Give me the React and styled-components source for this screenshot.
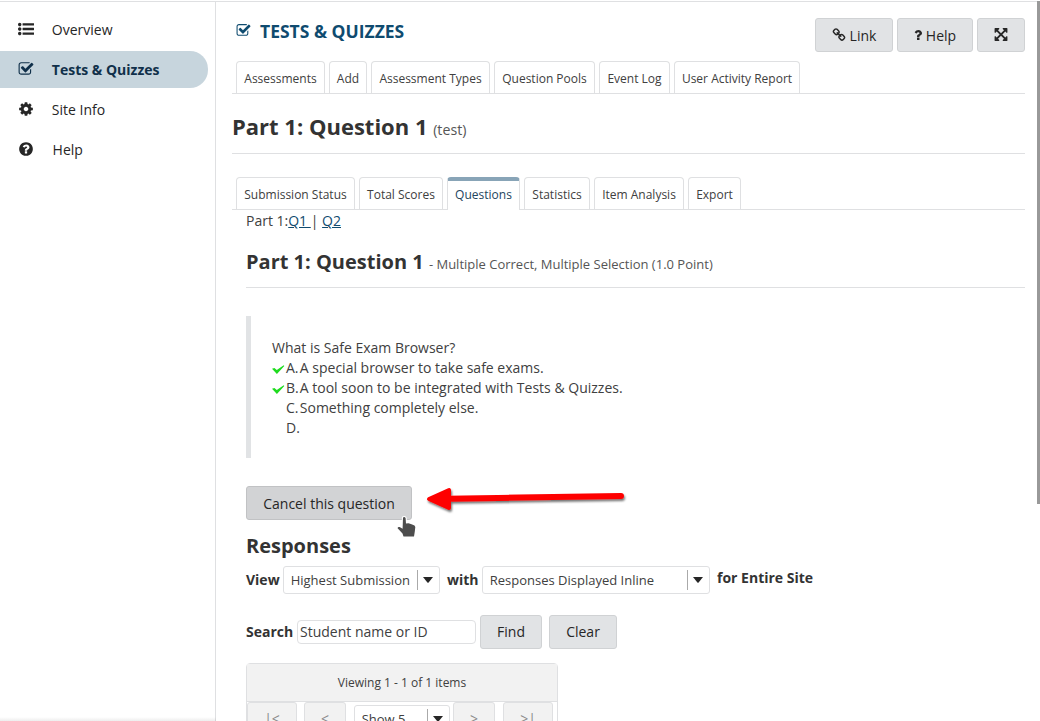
import React from "react";
import styled, { createGlobalStyle, css } from "styled-components";

const Global = createGlobalStyle`
  *, *::before, *::after { box-sizing: border-box; }
  html, body { margin: 0; padding: 0; background: #fff; overflow: hidden; }
  body {
    font-family: "Open Sans", "Noto Sans", sans-serif;
    font-size: 14px;
    line-height: 20px;
    color: #333;
  }
  h1, h2, h3, p, ul { margin: 0; padding: 0; }
`;

const Page = styled.div`
  position: relative;
  display: flex;
  width: 1040px;
  height: 721px;
  overflow: hidden;
  border-top: 1px solid #fff;
`;

const Sidebar = styled.nav`
  width: 216px;
  flex: none;
  border-top: 1px solid #dfe0e2;
  border-right: 1px solid #dfe0e2;
  padding-top: 9px;
  display: flex;
  flex-direction: column;
  gap: 3px;
`;

const NavItem = styled.a`
  display: flex;
  align-items: center;
  width: 208px;
  height: 37px;
  padding-left: 18px;
  border-radius: 0 18px 18px 0;
  color: #262626;
  ${(p) => p.$active && css`
    background: #c7d5dd;
    color: #10304a;
    font-weight: 700;
  `}
`;

const NavLabel = styled.span`
  margin-left: ${(p) => p.$gap || 17.8}px;
  padding-top: 1px;
`;

const Icon = styled.svg`
  flex: none;
  display: block;
  width: ${(p) => p.$w}px;
  height: ${(p) => p.$h}px;
  margin-bottom: ${(p) => p.$lift}px;
  fill: currentColor;
`;

const Main = styled.main`
  flex: 1;
  border-top: 1px solid #dfe0e2;
  padding: 0 15px 0 16px;
  display: flex;
  flex-direction: column;

  > * { flex: none; }
`;

const Header = styled.header`
  display: flex;
  justify-content: space-between;
  height: 59px;
  padding: 16px 0 0 4px;
`;

const ToolTitle = styled.h1`
  display: flex;
  align-items: center;
  gap: 9px;
  height: 26px;
  font-size: 17.5px;
  font-weight: 700;
  color: #0f4b6f;
`;

const Actions = styled.div`
  display: flex;
  gap: 4px;
`;

const Button = styled.button`
  flex: none;
  display: flex;
  align-items: center;
  justify-content: center;
  gap: 4px;
  width: ${(p) => p.$w}px;
  height: 34px;
  padding: ${(p) => (p.$low ? 2 : 0)}px 0 0;
  font: inherit;
  color: #262626;
  background: ${(p) => (p.$hover ? "#d2d3d5" : "#e1e3e5")};
  border: 1px solid ${(p) => (p.$hover ? "#c1c2c4" : "#d0d2d4")};
  border-radius: 3px;
`;

const Tabs = styled.div`
  display: flex;
  gap: 4px;
  height: 33px;
  padding-left: 4px;
  border-bottom: 1px solid #dfe0e2;
`;

const Tab = styled.a`
  display: flex;
  justify-content: center;
  width: ${(p) => p.$w}px;
  height: 32px;
  padding-top: 7px;
  font-size: 12px;
  white-space: nowrap;
  color: #404040;
  border: 1px solid #dfe0e2;
  border-bottom: 0;
  border-radius: 4px 4px 0 0;
  ${(p) => p.$active && css`
    height: 33px;
    padding-top: 4px;
    background: #fff;
    color: #24455e;
    border-top: 4px solid #88a4b7;
  `}
`;

const PageHeading = styled.h2`
  height: 60px;
  margin-bottom: 23px;
  padding-top: 19px;
  font-size: 22px;
  line-height: 26px;
  font-weight: 700;
  border-bottom: 1px solid #dfe0e2;
`;

const Small = styled.small`
  font-size: ${(p) => p.$size || 14.2}px;
  font-weight: 400;
  color: #555;
`;

const Body = styled.section`
  padding-left: 14px;
  display: flex;
  flex-direction: column;

  > * { flex: none; }
`;

const PartLinks = styled.p`
  height: 20px;
  margin-top: 1px;
  color: #404040;
  white-space: pre;
`;

const PartLink = styled.a`
  color: #0f4b6f;
  text-decoration: underline;
`;

const QuestionHeading = styled.h3`
  height: 57px;
  padding-top: 18px;
  font-size: 20px;
  line-height: 26px;
  font-weight: 700;
  border-bottom: 1px solid #dfe0e2;
`;

const Quote = styled.div`
  height: 142px;
  margin: 28px 0;
  padding: 22px 0 0 21px;
  border-left: 5px solid #e1e3e5;
  color: #404040;
`;

const Answer = styled.div`
  display: grid;
  grid-template-columns: 14px 13.8px 1fr;
  align-items: center;
  height: 20px;
`;

const TickMark = styled.svg`
  display: block;
  margin-top: 2px;
`;

const ResponsesHeading = styled.h3`
  height: 46px;
  padding-top: 13px;
  font-size: 20px;
  line-height: 26px;
  font-weight: 700;
`;

const FilterRow = styled.div`
  display: flex;
  align-items: center;
  height: 28px;
`;

const SearchRow = styled.div`
  display: flex;
  align-items: center;
  height: 34px;
  margin: 21px 0 14px;
`;

const SearchButtons = styled.div`
  display: flex;
  gap: 7px;
`;

const Label = styled.label`
  flex: none;
  width: ${(p) => p.$w}px;
  font-weight: 700;
  white-space: nowrap;
  ${(p) => p.$raised && css`
    padding-bottom: 4px;
  `}
`;

const SelectBox = styled.div`
  flex: none;
  display: flex;
  align-items: center;
  justify-content: space-between;
  width: ${(p) => p.$w}px;
  height: 28px;
  padding-left: 6.7px;
  margin-right: ${(p) => p.$gap || 0}px;
  font-size: 13px;
  color: #404040;
  background: #fff;
  border: 1px solid #dfe0e2;
  border-radius: 3px;
`;

const Caret = styled.span`
  display: flex;
  align-items: center;
  width: 22px;
  height: 20px;
  padding-left: 5px;
  border-left: 1px solid #aaa;
  color: #262626;
`;

const SearchInput = styled.div`
  width: 179px;
  height: 24px;
  margin-right: 4px;
  padding: 1px 2px;
  color: #404040;
  border: 1px solid #dfe0e2;
  border-radius: 4px;
`;

const Pager = styled.div`
  width: 312px;
  height: 80px;
  border: 1px solid #dfe0e2;
  border-radius: 4px 4px 0 0;
`;

const PagerInfo = styled.div`
  height: 38px;
  padding-top: 9px;
  font-size: 12px;
  text-align: center;
  color: #404040;
  background: #f2f2f2;
  border-bottom: 1px solid #dfe0e2;
`;

const PagerControls = styled.div`
  display: flex;
  align-items: flex-start;
`;

const PagerButton = styled.div`
  flex: none;
  width: ${(p) => p.$w}px;
  height: 34px;
  margin-right: ${(p) => p.$gap}px;
  padding-top: 6px;
  text-align: center;
  color: #8a8a8a;
  background: #f2f2f2;
  border: 1px solid #dfe0e2;
  border-radius: 3px;
`;

const PagerSelect = styled.div`
  padding-top: 3px;
`;

const ScrollThumb = styled.div`
  position: absolute;
  right: 0;
  top: -1px;
  width: 3px;
  height: 504px;
  background: #999;
`;

const BottomShade = styled.div`
  position: absolute;
  left: 0;
  bottom: 0;
  width: 216px;
  height: 4px;
  background: linear-gradient(to bottom, rgba(0, 0, 0, 0), rgba(0, 0, 0, 0.07));
`;

const Overlay = styled.svg`
  position: absolute;
  left: ${(p) => p.$x}px;
  top: ${(p) => p.$y}px;
`;

const paths = {
  list: "M384 1408q0 80-56 136t-136 56-136-56-56-136 56-136 136-56 136 56 56 136zm0-512q0 80-56 136t-136 56-136-56-56-136 56-136 136-56 136 56 56 136zm1408 416v192q0 13-9.5 22.5t-22.5 9.5h-1216q-13 0-22.5-9.5t-9.5-22.5v-192q0-13 9.5-22.5t22.5-9.5h1216q13 0 22.5 9.5t9.5 22.5zm-1408-928q0 80-56 136t-136 56-136-56-56-136 56-136 136-56 136 56 56 136zm1408 416v192q0 13-9.5 22.5t-22.5 9.5h-1216q-13 0-22.5-9.5t-9.5-22.5v-192q0-13 9.5-22.5t22.5-9.5h1216q13 0 22.5 9.5t9.5 22.5zm0-512v192q0 13-9.5 22.5t-22.5 9.5h-1216q-13 0-22.5-9.5t-9.5-22.5v-192q0-13 9.5-22.5t22.5-9.5h1216q13 0 22.5 9.5t9.5 22.5z",
  check: "M1472 930v318q0 119-84.5 203.5t-203.5 84.5h-832q-119 0-203.5-84.5t-84.5-203.5v-832q0-119 84.5-203.5t203.5-84.5h832q63 0 117 25 15 7 18 23 3 17-9 29l-49 49q-10 10-23 10-3 0-9-2-23-6-45-6h-832q-66 0-113 47t-47 113v832q0 66 47 113t113 47h832q66 0 113-47t47-113v-254q0-13 9-22l64-64q10-10 23-10 6 0 12 3 20 8 20 29zm231-489l-814 814q-24 24-57 24t-57-24l-430-430q-24-24-24-57t24-57l110-110q24-24 57-24t57 24l263 263 647-647q24-24 57-24t57 24l110 110q24 24 24 57t-24 57z",
  cog: "M1152 896q0-106-75-181t-181-75-181 75-75 181 75 181 181 75 181-75 75-181zm512-109v222q0 12-8 23t-20 13l-185 28q-19 54-39 91 35 50 107 138 10 12 10 25t-9 23q-27 37-99 108t-94 71q-12 0-26-9l-138-108q-44 23-91 38-16 136-29 186-7 28-36 28h-222q-14 0-24.5-8.5t-11.5-21.5l-28-184q-49-16-90-37l-141 107q-10 9-25 9-14 0-25-11-126-114-165-168-7-10-7-23 0-12 8-23 15-21 51-66.5t54-70.5q-27-50-41-99l-183-27q-13-2-21-12.5t-8-23.5v-222q0-12 8-23t19-13l186-28q14-46 39-92-40-57-107-138-10-12-10-24 0-10 9-23 26-36 98.5-107.5t94.5-71.5q13 0 26 10l138 107q44-23 91-38 16-136 29-186 7-28 36-28h222q14 0 24.5 8.5t11.5 21.5l28 184q49 16 90 37l142-107q9-9 24-9 13 0 25 10 129 119 165 170 7 8 7 22 0 12-8 23-15 21-51 66.5t-54 70.5q26 50 41 98l183 28q13 2 21 12.5t8 23.5z",
  help: "M1024 1376v-192q0-14-9-23t-23-9h-192q-14 0-23 9t-9 23v192q0 14 9 23t23 9h192q14 0 23-9t9-23zm256-672q0-88-55.5-163t-138.5-116-170-41q-243 0-371 213-15 24 8 42l132 100q7 6 19 6 16 0 25-12 53-68 86-92 34-24 86-24 48 0 85.5 26t37.5 59q0 38-20 61t-68 45q-63 28-115.5 86.5t-52.5 125.5v36q0 14 9 23t23 9h192q14 0 23-9t9-23q0-19 21.5-49.5t54.5-49.5q32-18 49-28.5t46-35 44.5-48 28-60.5 12.5-81zm384 192q0 209-103 385.5t-279.5 279.5-385.5 103-385.5-103-279.5-279.5-103-385.5 103-385.5 279.5-279.5 385.5-103 385.5 103 279.5 279.5 103 385.5z",
  question: "M1088 1256v240q0 16-12 28t-28 12h-240q-16 0-28-12t-12-28v-240q0-16 12-28t28-12h240q16 0 28 12t12 28zm316-600q0 54-15.5 101t-35 76.5-55 59.5-57.5 43.5-61 35.5q-41 23-68.5 65t-27.5 67q0 17-12 32.5t-28 15.5h-240q-15 0-25.5-18.5t-10.5-37.5v-45q0-83 65-156.5t143-108.5q59-27 84-56t25-76q0-42-46.5-74t-107.5-32q-65 0-108 29-35 25-107 115-13 16-31 16-12 0-25-8l-164-125q-13-10-15.5-25t5.5-28q160-266 464-266 80 0 161 31t146 83 106 127.5 41 158.5z",
  link: "M1520 1216q0-40-28-68l-208-208q-28-28-68-28-42 0-72 32 3 3 19 18.5t21.5 21.5 15 19 13 25.5 3.5 27.5q0 40-28 68t-68 28q-15 0-27.5-3.5t-25.5-13-19-15-21.5-21.5-18.5-19q-33 31-33 73 0 40 28 68l206 207q27 27 68 27 40 0 68-26l147-146q28-28 28-67zm-703-705q0-40-28-68l-206-207q-28-28-68-28-39 0-68 27l-147 146q-28 28-28 67 0 40 28 68l208 208q27 27 68 27 42 0 72-31-3-3-19-18.5t-21.5-21.5-15-19-13-25.5-3.5-27.5q0-40 28-68t68-28q15 0 27.5 3.5t25.5 13 19 15 21.5 21.5 18.5 19q33-31 33-73zm895 705q0 120-85 203l-147 146q-83 83-203 83-121 0-204-85l-206-207q-83-83-83-203 0-123 88-209l-88-88q-86 88-208 88-120 0-204-84l-208-208q-84-84-84-204t85-203l147-146q83-83 203-83 121 0 204 85l206 207q83 83 83 203 0 123-88 209l88 88q86-88 208-88 120 0 204 84l208 208q84 84 84 204z",
  expand: "M1411 541l-355 355 355 355 144-144q29-31 70-14 39 17 39 59v448q0 26-19 45t-45 19h-448q-42 0-59-40-17-39 14-69l144-144-355-355-355 355 144 144q31 30 14 69-17 40-59 40h-448q-26 0-45-19t-19-45v-448q0-42 40-59 39-17 69 14l144 144 355-355-355-355-144 144q-19 19-45 19-12 0-24-5-40-17-40-59v-448q0-26 19-45t45-19h448q42 0 59 40 17 39-14 69l-144 144 355 355 355-355-144-144q-31-30-14-69 17-40 59-40h448q26 0 45 19t19 45v448q0 42-39 59-13 5-25 5-26 0-45-19z",
};

const Glyph = ({ name, size = 16, width = size, lift = 1.5, viewBox = "0 0 1792 1792" }) => (
  <Icon viewBox={viewBox} $w={width} $h={size} $lift={lift} aria-hidden="true">
    <path d={paths[name]} />
  </Icon>
);

const Tick = () => (
  <TickMark width="13" height="9" viewBox="0 0 13 9" aria-hidden="true">
    <path d="M0 3.8 L2.4 3 L4.8 5 L11.7 0.2 L12.3 0.9 L4.9 8.9 Z" fill="#1fdb1f" />
  </TickMark>
);

const Select = ({ w, gap, children }) => (
  <SelectBox $w={w} $gap={gap}>
    {children}
    <Caret>
      <svg width="10" height="6" viewBox="0 0 10 6" aria-hidden="true">
        <path d="M0 0H10L5.6 5.4Q5 6 4.4 5.4Z" fill="currentColor" />
      </svg>
    </Caret>
  </SelectBox>
);

const mainTabs = [
  ["Assessments", 89], ["Add", 38], ["Assessment Types", 119],
  ["Question Pools", 101], ["Event Log", 71], ["User Activity Report", 126],
];

const scoreTabs = [
  ["Submission Status", 119], ["Total Scores", 84], ["Questions", 73],
  ["Statistics", 66], ["Item Analysis", 90], ["Export", 53],
];

const answers = [
  ["A.", "A special browser to take safe exams.", true],
  ["B.", "A tool soon to be integrated with Tests & Quizzes.", true],
  ["C.", "Something completely else.", false],
  ["D.", "", false],
];

export default function App() {
  return (
    <>
      <Global />
      <Page>
        <Sidebar>
          <NavItem><Glyph name="list" /><NavLabel>Overview</NavLabel></NavItem>
          <NavItem $active><Glyph name="check" /><NavLabel>Tests &amp; Quizzes</NavLabel></NavItem>
          <NavItem><Glyph name="cog" /><NavLabel>Site Info</NavLabel></NavItem>
          <NavItem><Glyph name="help" /><NavLabel $gap={18.6}>Help</NavLabel></NavItem>
        </Sidebar>

        <Main>
          <Header>
            <ToolTitle><Glyph name="check" size={15} lift={2} />TESTS &amp; QUIZZES</ToolTitle>
            <Actions>
              <Button $w={78} $low><Glyph name="link" size={14} lift={3} />Link</Button>
              <Button $w={76} $low>
                <Glyph name="question" size={14} width={8} lift={3} viewBox="384 0 1024 1792" />Help
              </Button>
              <Button $w={48}><Glyph name="expand" size={15} width={16} lift={2} /></Button>
            </Actions>
          </Header>

          <Tabs>
            {mainTabs.map(([label, w]) => <Tab key={label} $w={w}>{label}</Tab>)}
          </Tabs>

          <PageHeading>Part 1: Question 1 <Small>(test)</Small></PageHeading>

          <Tabs>
            {scoreTabs.map(([label, w]) => (
              <Tab key={label} $w={w} $active={label === "Questions"}>{label}</Tab>
            ))}
          </Tabs>

          <Body>
            <PartLinks>Part 1:<PartLink>{"Q1 "}</PartLink>{"| "}<PartLink>Q2</PartLink></PartLinks>
            <QuestionHeading>
              Part 1: Question 1 <Small $size={13}>- Multiple Correct, Multiple Selection (1.0 Point)</Small>
            </QuestionHeading>

            <Quote>
              <p>What is Safe Exam Browser?</p>
              {answers.map(([letter, text, correct]) => (
                <Answer key={letter}>
                  <span>{correct && <Tick />}</span>
                  <span>{letter}</span>
                  <span>{text}</span>
                </Answer>
              ))}
            </Quote>

            <Button $w={166} $hover $low>Cancel this question</Button>

            <ResponsesHeading>Responses</ResponsesHeading>

            <FilterRow>
              <Label $w={37}>View</Label>
              <Select w={157} gap={7}>Highest Submission</Select>
              <Label $w={35}>with</Label>
              <Select w={228} gap={7}>Responses Displayed Inline</Select>
              <Label $w={100} $raised>for Entire Site</Label>
            </FilterRow>

            <SearchRow>
              <Label $w={51}>Search</Label>
              <SearchInput>Student name or ID</SearchInput>
              <SearchButtons>
                <Button $w={62}>Find</Button>
                <Button $w={68}>Clear</Button>
              </SearchButtons>
            </SearchRow>

            <Pager>
              <PagerInfo>Viewing 1 - 1 of 1 items</PagerInfo>
              <PagerControls>
                <PagerButton $w={50} $gap={7}>|&lt;</PagerButton>
                <PagerButton $w={42} $gap={8}>&lt;</PagerButton>
                <PagerSelect><Select w={96} gap={3}>Show 5</Select></PagerSelect>
                <PagerButton $w={42} $gap={8}>&gt;</PagerButton>
                <PagerButton $w={50} $gap={0}>&gt;|</PagerButton>
              </PagerControls>
            </Pager>
          </Body>
        </Main>

        <ScrollThumb />
        <BottomShade />

        <Overlay $x={420} $y={480} width="212" height="40" viewBox="0 0 212 40" aria-hidden="true">
          <defs>
            <filter id="arrowShadow" x="-10%" y="-50%" width="120%" height="220%">
              <feDropShadow dx="1" dy="2" stdDeviation="1.3" floodColor="#000" floodOpacity="0.55" />
            </filter>
          </defs>
          <g filter="url(#arrowShadow)" fill="#fe0000" stroke="#fe0000" strokeLinejoin="round" strokeLinecap="round">
            <path d="M9 18 L29 9 L29 27 Z" strokeWidth="4" />
            <path d="M28 17.7 L201 15" strokeWidth="6" />
          </g>
        </Overlay>

        <Overlay $x={393.5} $y={514} width="24" height="26" viewBox="0 0 24 26" aria-hidden="true">
          <path
            d="M9 2.5 Q10.6 1.4 11.6 3 L12 8.5 L14.5 8.2 L17.5 9.2 L20.5 10.4 L21.3 12 L20.8 16.5 L20 21.5 L9.5 21.5 L8.5 18.5 L3.6 13.3 Q3.6 11.6 5.6 12 L8.6 13.8 Z"
            fill="#4d4d4d" stroke="#fff" strokeWidth="2.2" strokeLinejoin="round" paintOrder="stroke"
          />
        </Overlay>
      </Page>
    </>
  );
}
